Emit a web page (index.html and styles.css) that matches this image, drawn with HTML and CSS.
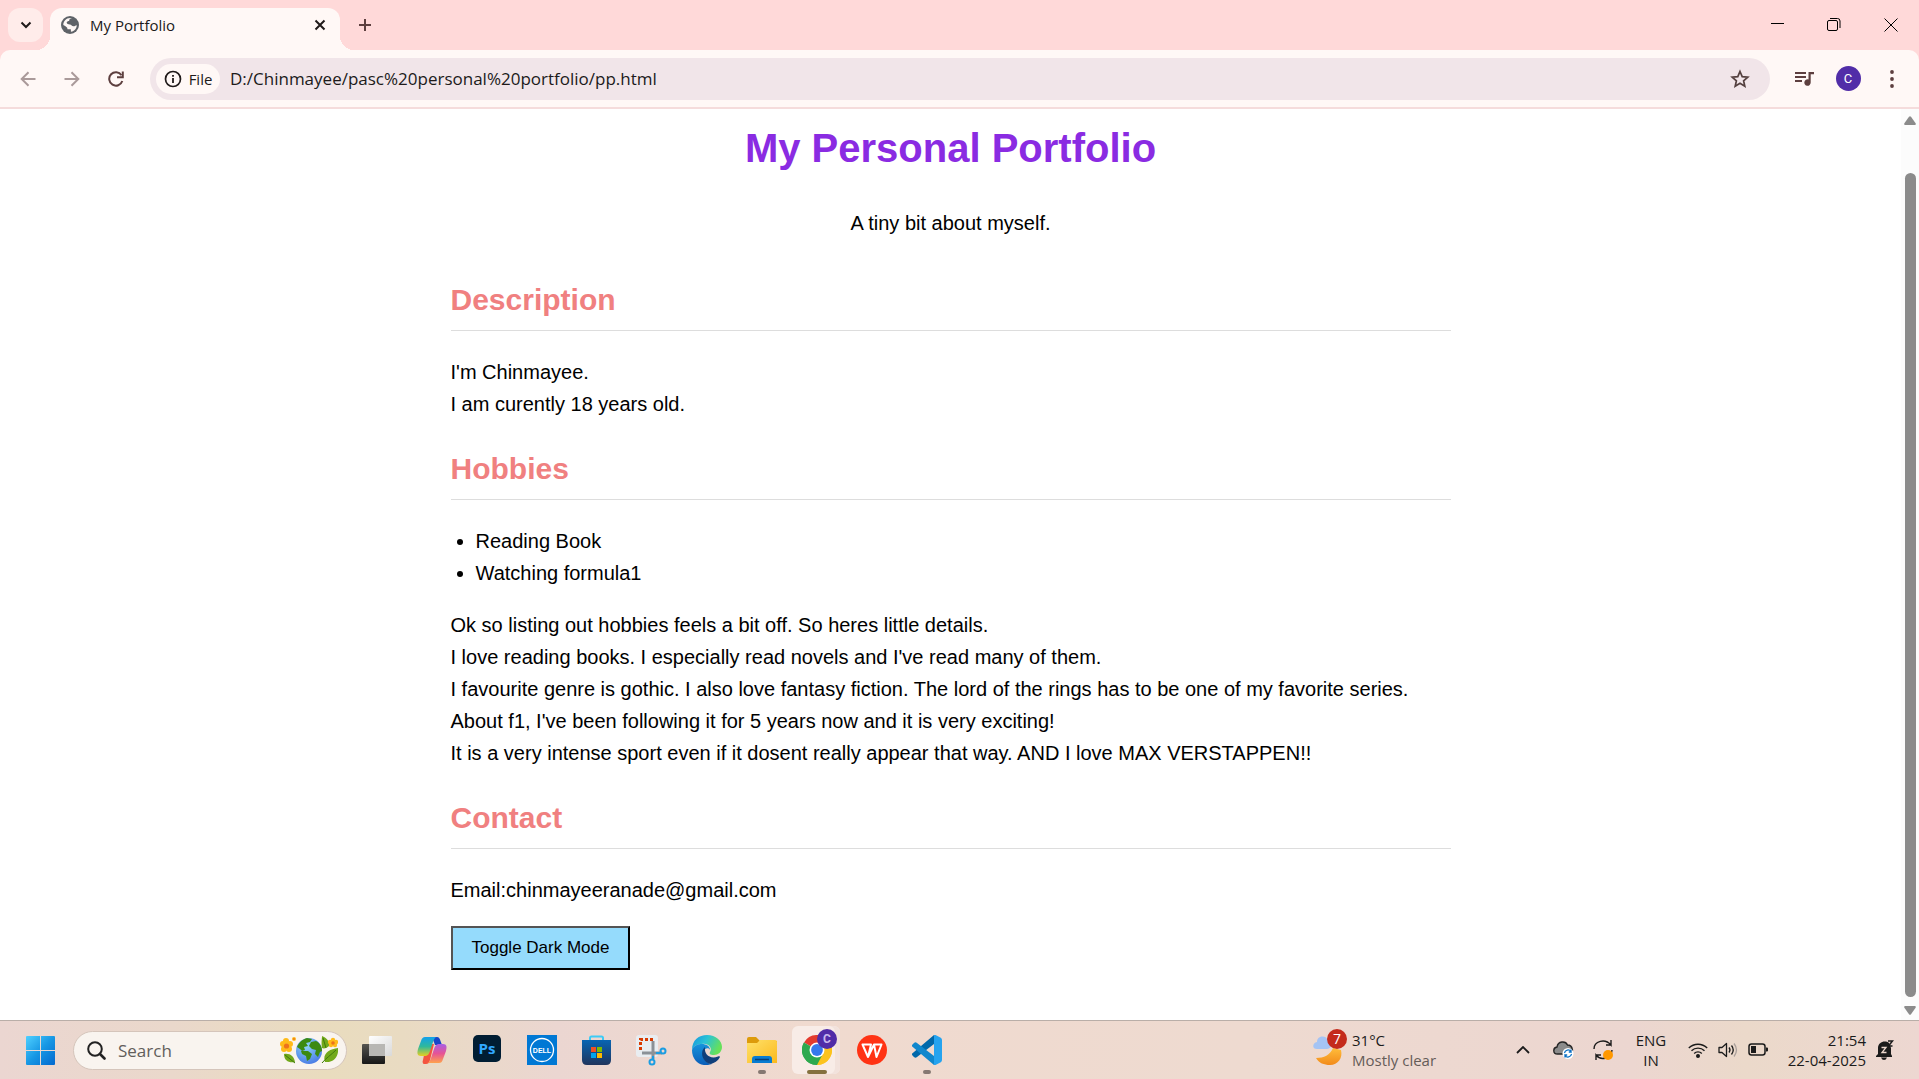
FILE: index.html
```html
<!DOCTYPE html>
<html lang="en">
<head>
<meta charset="utf-8">
<title>My Portfolio</title>
<link rel="stylesheet" href="styles.css">
</head>
<body>
<header class="browser">
  <div class="tabstrip">
    <button class="tab-search" aria-label="Search tabs"><svg width="12" height="8" viewBox="0 0 12 8"><path d="M1.500 1.500 6 6l4.500-4.500" fill="none" stroke="#201a1a" stroke-width="2"/></svg></button>
    <div class="tab">
      <svg width="18" height="18" viewBox="0 0 18 18"><circle cx="9" cy="9" r="9" fill="#5f6368"/><path d="M11 2.200C9.500 2 8.300 3 8.300 4.200c0 1.300-2.600.6-2.600 2.400 0 1.400 1.500 1.800 3 1.800 2 0 2 1.900 3.800 1.900 1.500 0 2-1.100 3.300-1.100-.1 3-2.300 6-5.800 6.500-.4-.9.300-1.700-.3-2.500H6.500c0-2.200-1.500-2.500-4.200-4.200C2.200 5 6 1 11 2.200z" fill="#fff8f6"/></svg>
      <span class="tab-title">My Portfolio</span>
      <button class="icon-button" aria-label="Close tab"><svg width="12" height="12" viewBox="0 0 12 12"><path d="m1.500 1.500 9 9m0-9-9 9" fill="none" stroke="#201a1a" stroke-width="2"/></svg></button>
    </div>
    <button class="new-tab" aria-label="New tab"><svg width="14" height="14" viewBox="0 0 14 14"><path d="M7 1v12M1 7h12" fill="none" stroke="#5d3f3f" stroke-width="2"/></svg></button>
    <div class="window-controls">
      <button aria-label="Minimize"><svg width="14" height="14" viewBox="0 0 14 14"><path d="M1 5.500h13" stroke="#000"/></svg></button>
      <button aria-label="Restore"><svg width="14" height="14" viewBox="0 0 14 14" fill="none" stroke="#000"><rect x=".5" y="2.500" width="10" height="10" rx="1.500"/><path d="M3 .5h7.500a2.500 2.500 0 0 1 2.500 2.500V10"/></svg></button>
      <button aria-label="Close"><svg width="14" height="14" viewBox="0 0 14 14"><path d="m.5.5 13 13m0-13-13 13" stroke="#000"/></svg></button>
    </div>
  </div>
  <div class="toolbar">
    <button class="tool" aria-label="Back"><svg width="16" height="16" viewBox="0 0 16 16" fill="none" stroke="#aa9a9a" stroke-width="2"><path d="M15.500 8H2M8.500 1.200 1.700 8l6.800 6.800"/></svg></button>
    <button class="tool" aria-label="Forward"><svg width="16" height="16" viewBox="0 0 16 16" fill="none" stroke="#aa9a9a" stroke-width="2"><path d="M.5 8H14M7.500 1.200 14.300 8l-6.800 6.800"/></svg></button>
    <button class="tool" aria-label="Reload"><svg width="16" height="16" viewBox="0 0 16 16" fill="none" stroke="#5d3f3f" stroke-width="2"><path d="M14.300 10A6.700 6.700 0 1 1 13.500 4.200"/><path d="M14.800.5v5.700H9"/></svg></button>
    <div class="omnibox">
      <button class="chip"><svg width="18" height="18" viewBox="0 0 18 18"><circle cx="9" cy="9" r="7.500" fill="none" stroke="#201a1a" stroke-width="1.700"/><path d="M9 8v5M9 5v1.800" stroke="#201a1a" stroke-width="1.800"/></svg>File</button>
      <input class="url" aria-label="Address" value="D:/Chinmayee/pasc%20personal%20portfolio/pp.html">
      <button class="icon-button" aria-label="Bookmark this page"><svg width="20" height="20" viewBox="0 0 20 20"><path d="m10 2.500 2.200 5.100 5.600.5-4.200 3.700 1.200 5.400L10 14.300l-4.800 2.900 1.200-5.400-4.200-3.700 5.600-.5z" fill="none" stroke="#54403f" stroke-width="1.700"/></svg></button>
    </div>
    <button class="tool" aria-label="Media controls"><svg width="20" height="16" viewBox="0 0 20 16"><path d="M1 2h11M1 6h11M1 10h7" stroke="#5d3f3f" stroke-width="2"/><path d="M14.500 1H20v2.200h-3.300v8.300a3.200 3.200 0 1 1-2.200-3z" fill="#5d3f3f"/></svg></button>
    <button class="tool" aria-label="Profile"><span class="avatar">C</span></button>
    <button class="tool" aria-label="Menu"><svg width="4" height="18" viewBox="0 0 4 18" fill="#5d3f3f"><circle cx="2" cy="2" r="1.900"/><circle cx="2" cy="9" r="1.900"/><circle cx="2" cy="16" r="1.900"/></svg></button>
  </div>
</header>

<div class="viewport">
  <main class="page">
    <div class="intro">
      <h1>My Personal Portfolio</h1>
      <p>A tiny bit about myself.</p>
    </div>
    <section>
      <h2>Description</h2>
      <p>I'm Chinmayee.<br>I am curently 18 years old.</p>
    </section>
    <section>
      <h2>Hobbies</h2>
      <ul>
        <li>Reading Book</li>
        <li>Watching formula1</li>
      </ul>
      <p>Ok so listing out hobbies feels a bit off. So heres little details.<br>
      I love reading books. I especially read novels and I've read many of them.<br>
      I favourite genre is gothic. I also love fantasy fiction. The lord of the rings has to be one of my favorite series.<br>
      About f1, I've been following it for 5 years now and it is very exciting!<br>
      It is a very intense sport even if it dosent really appear that way. AND I love MAX VERSTAPPEN!!</p>
    </section>
    <section>
      <h2>Contact</h2>
      <p>Email:chinmayeeranade@gmail.com</p>
      <button class="toggle">Toggle Dark Mode</button>
    </section>
  </main>
  <div class="scrollbar" aria-hidden="true">
    <svg width="12" height="9" viewBox="0 0 12 9"><path d="M5 .8a1.300 1.300 0 0 1 2 0l4.600 6.400c.5.900 0 1.800-.9 1.800H1.300C.4 9-.1 8.100.4 7.200z" fill="#8b8b8b"/></svg>
    <div class="thumb"></div>
    <svg width="12" height="9" viewBox="0 0 12 9"><path d="M5 8.200a1.300 1.300 0 0 0 2 0l4.600-6.400c.5-.9 0-1.800-.9-1.800H1.300C.4 0-.1.900.4 1.800z" fill="#8b8b8b"/></svg>
  </div>
</div>

<footer class="taskbar">
  <button class="start" aria-label="Start"><svg width="29" height="29" viewBox="0 0 29 29"><defs><linearGradient id="win" x1="0" y1="0" x2="1" y2="1" gradientUnits="objectBoundingBox"><stop offset="0" stop-color="#4fd0ff"/><stop offset=".5" stop-color="#1797e4"/><stop offset="1" stop-color="#0268cf"/></linearGradient></defs><path d="M1 0h13v14H0V1a1 1 0 0 1 1-1zm14 0h13a1 1 0 0 1 1 1v13H15zM0 15h14v14H1a1 1 0 0 1-1-1zm15 0h14v13a1 1 0 0 1-1 1H15z" fill="url(#win)"/></svg></button>
  <label class="search">
    <svg width="19" height="19" viewBox="0 0 19 19"><circle cx="8" cy="8" r="6.800" fill="none" stroke="#222" stroke-width="2"/><path d="m13 13 4.500 4.500" stroke="#222" stroke-width="2.600" stroke-linecap="round"/></svg>
    <input type="text" placeholder="Search" aria-label="Search">
    <svg width="58" height="30" viewBox="0 0 58 30"><defs><radialGradient id="sea" cx=".4" cy=".3" r=".8"><stop offset="0" stop-color="#8fd5fb"/><stop offset="1" stop-color="#4272e3"/></radialGradient></defs>
      <circle cx="29" cy="16" r="13" fill="url(#sea)"/><path d="M17 12c2-5 6-8 10-9l5 1-2 3-4 1 2 3-4 1 1 3-3 1-2-2zM31 7l5-1c4 2 6 6 6 10l-2 1-2 5-3-3 1-4-4-1-3-3zM21 16l7 0 4 3-2 5-3 2-1-5-4-2z" fill="#3c8a12"/>
      <path d="M42 13c-1-5 0-9 0-12 5 2 8 6 7 10-2 2-5 3-7 2zM45 27c-3-8 4-13 13-14 1 8-4 15-13 14zM4 19c6-1 10 2 11 8-6 1-11-1-11-8z" fill="#72a91b"/><path d="m43 3 3 10M42 28c4-5 9-8 14-13M5 20l10 8" stroke="#3e790c" fill="none"/>
      <g fill="#ffbb19"><circle cx="3" cy="9" r="3"/><circle cx="10" cy="9" r="3"/><circle cx="6" cy="6" r="3"/><circle cx="4" cy="14" r="3"/><circle cx="9" cy="14" r="3"/><circle cx="14" cy="4" r="2"/><circle cx="50" cy="7" r="2.200"/><circle cx="56" cy="7" r="2.200"/><circle cx="53" cy="5" r="2.200"/><circle cx="51" cy="10" r="2.200"/><circle cx="55" cy="10" r="2.200"/></g><g fill="#ed731b"><circle cx="6.500" cy="11" r="2.600"/><circle cx="53" cy="8" r="1.800"/><circle cx="14" cy="4" r=".9"/></g></svg>
  </label>
  <nav class="apps" aria-label="Pinned apps">
    <button aria-label="Task view"><svg width="30" height="30" viewBox="0 0 30 30"><defs><linearGradient id="tv" x2="0" y2="1"><stop stop-color="#555450"/><stop offset="1" stop-color="#171717"/></linearGradient><linearGradient id="tw" x2="1" y2="1"><stop stop-color="#fff"/><stop offset="1" stop-color="#d9d9d9"/></linearGradient></defs><rect y="9" width="23" height="20" rx="1" fill="url(#tv)"/><rect x="7" y="1" width="23" height="20" rx="1" fill="url(#tw)"/><path d="M7 9h16v12H8a1 1 0 0 1-1-1z" fill="#b8b7b4"/></svg></button>
    <button aria-label="Copilot"><svg width="30" height="28" viewBox="0 0 30 28"><defs><linearGradient id="ca" x2="0" y2="1"><stop stop-color="#12a0ec"/><stop offset=".5" stop-color="#2fb99b"/><stop offset="1" stop-color="#e8cf20"/></linearGradient><linearGradient id="cb" x2="0" y2="1"><stop stop-color="#a760e6"/><stop offset=".5" stop-color="#e65395"/><stop offset="1" stop-color="#ffa24c"/></linearGradient></defs>
      <path d="M15 1h5c2 0 3 2 3.500 4L25 9h-7z" fill="#1746c8"/><path d="M7 19 13 8h4l-4 16c-1 3-2 4-4 4H7c-1 0-2-2-1-4z" fill="#f4543f"/><path d="M8 1h12c-2 0-3 2-4 5l-3 9c-1 3-2 5-6 5H4c-4 0-4-3-3-7L4 5c1-3 2-4 4-4z" fill="url(#ca)"/><path d="M22 27H10c2 0 3-2 4-5l3-9c1-3 2-5 6-5h3c4 0 4 3 3 7l-3 8c-1 3-2 4-4 4z" fill="url(#cb)"/></svg></button>
    <button aria-label="Photoshop"><svg width="28" height="32" viewBox="0 0 28 32"><rect y="1" width="28" height="27" rx="5" fill="#001d33"/><text x="14" y="20" text-anchor="middle" class="logo-ps">Ps</text></svg></button>
    <button aria-label="Dell"><svg width="30" height="30" viewBox="0 0 30 30"><path d="M0 0h30v30H0z" fill="#0078d4"/><circle cx="15" cy="15" r="11.500" fill="none" stroke="#fff" stroke-width="1.300"/><text x="15" y="18" text-anchor="middle" class="logo-dell">DELL</text></svg></button>
    <button aria-label="Microsoft Store"><svg width="29" height="30" viewBox="0 0 29 30"><defs><linearGradient id="st" x2="0" y2="1"><stop stop-color="#0865b3"/><stop offset="1" stop-color="#20355d"/></linearGradient></defs><path d="M8 6V3q0-1.500 1.500-1.500h10Q21 1.500 21 3v3" fill="none" stroke="#3dcbf6" stroke-width="2"/><path d="M0 5h29v20q0 5-5 5H5q-5 0-5-5z" fill="url(#st)"/><path d="M9 12h5v5H9z" fill="#f25022"/><path d="M15 12h5v5h-5z" fill="#7fba00"/><path d="M9 18h5v5H9z" fill="#00a4ef"/><path d="M15 18h5v5h-5z" fill="#ffb900"/></svg></button>
    <button aria-label="Snipping Tool"><svg width="31" height="32" viewBox="0 0 31 32"><rect y="1" width="22" height="22" rx="3" fill="#e9edf1"/><path d="M4.500 16V5.500H17" fill="none" stroke="#d83b01" stroke-width="3" stroke-dasharray="3 2"/><path d="M17 7v18M6 19h20" stroke="#8b9197" stroke-width="3"/><g fill="none" stroke="#1b9de2" stroke-width="2"><circle cx="16" cy="28" r="2.500"/><circle cx="27" cy="17" r="2.500"/><path d="M17 25v-3M20 19h4"/></g></svg></button>
    <button aria-label="Edge"><svg width="30" height="30" viewBox="0 0 30 30"><defs><linearGradient id="ed" x2="1" y2=".4"><stop stop-color="#1593e0"/><stop offset=".5" stop-color="#2bc3d5"/><stop offset="1" stop-color="#66e05a"/></linearGradient><linearGradient id="ee" x2="0" y2="1"><stop stop-color="#1793dc"/><stop offset="1" stop-color="#0a5db8"/></linearGradient></defs><path d="M0 15C0 5 7 0 15 0c9 0 15 6 15 12 0 5-4 8-8 8-4 0-5-1-4-3 3-4-2-9-8-8-5 0-8 2-10 6z" fill="url(#ed)"/><path d="M0 15c2-5 6-6 10-6 4 0 8 2 8 6-1-3-6-2-7 2-1 6 3 12 9 12C9 33 0 26 0 15z" fill="url(#ee)"/><path d="M13 12c-6 5-2 16 6 17 3-1 7-3 9-7 0-1-1-1-2-.5-8 3-14-2-13-9.500z" fill="#103f7b"/></svg></button>
    <button aria-label="File Explorer" class="running"><svg width="30" height="27" viewBox="0 0 30 27"><defs><linearGradient id="fo" x2="1" y2="1"><stop stop-color="#ffe16a"/><stop offset="1" stop-color="#fbb91c"/></linearGradient></defs><path d="M0 2q0-2 2-2h7l4 4h17v4H0z" fill="#dd9b0b"/><path d="M0 6h10l3-3h15q2 0 2 2v21H0z" fill="url(#fo)"/><path d="M5 26v-4q0-3 3-3h14q3 0 3 3v4z" fill="#087cd1"/><path d="M8 22.500h14" stroke="#063f77" stroke-width="1.500"/></svg></button>
    <button aria-label="Chrome" class="active"><svg width="30" height="30" viewBox="0 0 30 30"><path d="M15 15 2 7.500A15 15 0 0 1 28 7.500z" fill="#e33b2e"/><path d="M15 15 28 7.500A15 15 0 0 1 15 30z" fill="#fcc31e"/><path d="M15 15v15A15 15 0 0 1 2 7.500z" fill="#2da94f"/><path d="M15 8h13.300A15 15 0 0 1 15 30l6-11.500z" fill="#fcc31e"/><path d="M9 18.500 2 7.500A15 15 0 0 0 15 30l6-11.500z" fill="#2da94f"/><circle cx="15" cy="15" r="7.500" fill="#fff"/><circle cx="15" cy="15" r="5.900" fill="#3579ed"/></svg><span class="badge">C</span></button>
    <button aria-label="WPS Office"><svg width="30" height="30" viewBox="0 0 30 30"><circle cx="15" cy="15" r="15" fill="#ff3314"/><path d="M5.500 9.500H14l-3 12.500zM11 22l6-12.500 2.500 12.500 5-12.500H17" fill="none" stroke="#fff" stroke-width="2" stroke-linejoin="round"/></svg></button>
    <button aria-label="Visual Studio Code" class="running"><svg width="30" height="30" viewBox="0 0 30 30"><path d="M22 0v9L5 22c-1 1-2 1-3 0l-1.500-1.500c-.8-.8-.8-1.600 0-2.300z" fill="#0068aa"/><path d="M22 30v-9L5 8C4 7 3 7 2 8L.5 9.500c-.8.8-.8 1.600 0 2.300z" fill="#1087cd"/><path d="M22 0q.7-.3 1.500 0L28.800 2.800Q30 3.500 30 5v20q0 1.500-1.200 2.200L23.500 30q-.8.300-1.500 0z" fill="#25a3ef"/></svg></button>
  </nav>
  <button class="weather">
    <span class="weather-icon"><svg width="34" height="34" viewBox="0 0 34 34"><defs><linearGradient id="mo" x2="0" y2="1"><stop stop-color="#ffbd3b"/><stop offset="1" stop-color="#f28a1a"/></linearGradient></defs><path d="M3 25c8 0 14-3 17-10l8 2c2 8-3 15-11 15-6 0-11-2-14-7z" fill="url(#mo)"/><path d="M4 16c-5 0-5-6 0-7 0-6 8-7 10-3 5 0 6 10 0 10z" fill="#a5c4f4"/></svg><span class="count">7</span></span>
    <span class="weather-text"><span>31°C</span><span class="dim">Mostly clear</span></span>
  </button>
  <div class="tray">
    <button aria-label="Show hidden icons"><svg width="14" height="8" viewBox="0 0 14 8"><path d="m1 7 6-6 6 6" fill="none" stroke="#1b1b1b" stroke-width="1.800"/></svg></button>
    <button aria-label="OneDrive"><svg width="21" height="18" viewBox="0 0 21 18"><path d="M4.500 13C-.5 13-.2 6.500 4 6 5 0 12.500-.5 14.500 4c5.500 0 7 9 1.500 9z" fill="#8b8b8b" stroke="#252525" stroke-width="1.400"/><circle cx="15" cy="12.500" r="5.500" fill="#fff"/><path d="M11.500 12a3.600 3.600 0 0 1 6.500-1.500V8.500m0 2.500h-2.200M18.500 13a3.600 3.600 0 0 1-6.500 1.500v2m0-2.500h2.200" fill="none" stroke="#0a6fc4" stroke-width="1.300"/></svg></button>
    <button aria-label="Updates available"><svg width="22" height="22" viewBox="0 0 22 22"><path d="M2 10C2 2 13-1 19 6V1m0 5h-5M20 11a9 9 0 0 1-16 5v5m0-5h5" fill="none" stroke="#1b1b1b" stroke-width="1.400"/><circle cx="16" cy="16" r="5" fill="#ff9800"/></svg></button>
    <button class="language"><span>ENG</span><span>IN</span></button>
    <button class="status" aria-label="Network, volume and battery">
      <svg width="20" height="16" viewBox="0 0 20 16" fill="none" stroke="#1b1b1b" stroke-width="1.400"><path d="M.8 6a13 13 0 0 1 18.400 0M3.500 8.800a9.200 9.200 0 0 1 13 0M6.200 11.500a5.300 5.300 0 0 1 7.600 0"/><circle cx="10" cy="14" r="1.300" fill="#1b1b1b"/></svg>
      <svg width="20" height="16" viewBox="0 0 20 16" fill="none" stroke="#1b1b1b" stroke-width="1.300"><path d="M1 5.500h3L8.500 1.500v13L4 10.500H1z" stroke-linejoin="round"/><path d="M11 5.500q2 2.500 0 5M13.500 3.500q3.500 4.500 0 9"/><path d="M16 1.500q5 6.500 0 13" stroke="#aaa09b"/></svg>
      <svg width="20" height="16" viewBox="0 0 20 16"><rect x="1" y="2" width="16" height="11" rx="2.500" fill="none" stroke="#1b1b1b" stroke-width="1.500"/><path d="M3 4h5v7H3zM18 5.500h1q1 0 1 1v2q0 1-1 1h-1z" fill="#1b1b1b"/></svg>
    </button>
    <button class="clock"><span>21:54</span><span>22-04-2025</span></button>
    <button class="bell" aria-label="Notifications"><svg width="18" height="20" viewBox="0 0 18 20"><path d="M2 8C2 2 9 0 13 3l2 5v6l1 2v1H0v-1l2-2zM5 17.500h6q-1 2.500-3 2.500t-3-2.500z" fill="#1b1b1b"/><path d="M12 1h4.500l-4 5h4" fill="none" stroke="#1b1b1b" stroke-width="1.500"/><path d="M5.500 7.500H10l-4 5h4.500" fill="none" stroke="#ecd8cd" stroke-width="1.300"/></svg></button>
  </div>
</footer>
</body>
</html>
```
FILE: styles.css
```css
* { box-sizing: border-box; }

body {
  margin: 0;
  min-height: 100vh;
  display: flex;
  flex-direction: column;
  background: #fff;
  font-family: "Open Sans", "Noto Sans", sans-serif;
  font-size: 16px;
  color: #201a1a;
}

button {
  font: inherit;
  color: inherit;
  background: none;
  border: 0;
  padding: 0;
  display: flex;
  align-items: center;
  justify-content: center;
}

input {
  font: inherit;
  color: inherit;
  background: none;
  border: 0;
  padding: 0;
  min-width: 0;
  outline: 0;
}

svg { display: block; flex: none; }

/* Browser window */
.browser { background: #ffd9d9; }

.tabstrip {
  display: flex;
  height: 50px;
  padding: 8px 0 0 8px;
}

.tab-search {
  width: 35px;
  height: 34px;
  margin-right: 7px;
  border-radius: 12px;
  background: #ffecea;
}

.tab {
  position: relative;
  display: flex;
  align-items: center;
  gap: 11px;
  width: 290px;
  padding: 0 4px 8px 11px;
  border-radius: 12px 12px 0 0;
  background: #fff8f6;
  font-size: 15px;
}

.tab::before,
.tab::after {
  content: "";
  position: absolute;
  bottom: 0;
  width: 14px;
  height: 14px;
}

.tab::before {
  right: 100%;
  background: radial-gradient(circle at 0 0, transparent 14px, #fff8f6 14px);
}

.tab::after {
  left: 100%;
  background: radial-gradient(circle at 100% 0, transparent 14px, #fff8f6 14px);
}

.tab-title { flex: 1; }

.icon-button { width: 32px; height: 32px; }

.new-tab { width: 50px; height: 34px; }

.window-controls {
  display: flex;
  margin-left: auto;
}

.window-controls button { width: 57px; height: 34px; }

.toolbar {
  display: flex;
  align-items: center;
  height: 59px;
  padding: 0 5px 0 6px;
  border-bottom: 2px solid #f5dcdc;
  border-radius: 10px 10px 0 0;
  background: #fff8f6;
}

.tool { width: 44px; height: 42px; }

.omnibox {
  flex: 1;
  display: flex;
  align-items: center;
  gap: 10px;
  height: 42px;
  margin: 0 12px;
  padding: 0 14px 0 6px;
  border-radius: 21px;
  background: #f1e5e9;
}

.chip {
  gap: 7px;
  width: 64px;
  height: 30px;
  border-radius: 15px;
  background: #fff8f6;
  font-size: 15px;
}

.url { flex: 1; font-size: 17px; }

.avatar {
  width: 25px;
  height: 25px;
  border-radius: 50%;
  background: #512da8;
  color: #fff;
  font: 13px/25px Roboto, sans-serif;
  text-align: center;
}

/* Web page */
.viewport {
  flex: 1;
  display: flex;
}

.page {
  width: 1000px;
  margin: 0 auto;
  padding: 7px 0 49px;
  font: 20px/32px "Liberation Sans", Arial, sans-serif;
  color: #000;
}

.page p { margin: 0 0 20px; }

.page .intro { text-align: center; }

.page .intro p { margin-bottom: 37px; }

.page h1 {
  margin: 0 0 27px;
  font-size: 40px;
  line-height: 64px;
  color: #8a2be2;
}

.page h2 {
  margin: 0 0 25px;
  padding-bottom: 6px;
  border-bottom: 1px solid #ddd;
  font-size: 30px;
  line-height: 48px;
  color: #f08080;
}

.page section + section { margin-top: 25px; }

.page section > p:last-child { margin-bottom: 0; }

.page ul { margin: 0 0 20px; padding-left: 25px; }

.toggle {
  height: 44px;
  padding: 0 19px;
  border: 2px outset #000;
  background: #95dbfc;
  font-size: 17px;
}

.scrollbar {
  display: flex;
  flex-direction: column;
  align-items: center;
  width: 18px;
  padding: 7px 0 5px;
  background: #fcfcfc;
}

.thumb {
  flex: 1;
  width: 11px;
  margin: 48px 0 9px;
  border-radius: 6px;
  background: #8b8b8b;
}

/* Taskbar */
.taskbar {
  display: flex;
  align-items: center;
  height: 59px;
  border-top: 1px solid #b9aea8;
  background: linear-gradient(90deg, #ebd6d1 0%, #ead8cb 9%, #e9dcbe 17%, #e9dbc2 21%, #ebd6d1 29%, #f0dacf 42%, #eedad0 65%, #ecd6d0 85%, #ebd9ca 91%, #edd7d1 100%);
  color: #1b1b1b;
}

.start { width: 55px; height: 48px; margin: 0 5px 0 13px; }

.search {
  display: flex;
  align-items: center;
  width: 274px;
  height: 39px;
  margin-right: 2px;
  padding: 0 8px 0 13px;
  border: 1px solid #d5c5bb;
  border-radius: 20px;
  background: #f9f4ef;
}

.search input { flex: 1; margin-left: 12px; font-size: 17px; }

.search input::placeholder { color: #625e5b; opacity: 1; }

.apps { display: flex; }

.apps button { position: relative; width: 55px; height: 48px; }

.apps .running::after,
.apps .active::after {
  content: "";
  position: absolute;
  bottom: 0;
  width: 8px;
  height: 4px;
  border-radius: 2px;
  background: #857872;
}

.apps .active::after { width: 20px; background: #84713e; }

.apps .active::before {
  content: "";
  position: absolute;
  inset: 0 4px 0 3px;
  border-radius: 6px;
  background: #f8ece7;
  box-shadow: inset -5px 0 #f2e2dc;
}

.active svg { position: relative; }

.badge {
  position: absolute;
  top: 3px;
  right: 7px;
  width: 20px;
  height: 20px;
  border-radius: 50%;
  background: #512da8;
  color: #c8b8ee;
  font: bold 12px/20px Roboto, sans-serif;
}

.logo-ps { font: bold 15px "Open Sans", sans-serif; fill: #31a8ff; }

.logo-dell { font: bold 7px "Liberation Sans", sans-serif; fill: #fff; }

.weather {
  gap: 5px;
  width: 190px;
  margin-left: auto;
  justify-content: flex-start;
}

.weather-icon { position: relative; }

.count {
  position: absolute;
  top: -4px;
  left: 14px;
  width: 20px;
  height: 20px;
  border-radius: 50%;
  background: #c42b1c;
  color: #fff;
  font-size: 14px;
  line-height: 20px;
}

.weather-text,
.language,
.clock {
  display: flex;
  flex-direction: column;
  font-size: 15px;
  line-height: 20px;
}

.weather-text { align-items: flex-start; }

.dim { color: #655c58; }

.tray { display: flex; padding-right: 15px; }

.tray button { width: 40px; height: 48px; }

.tray .language { width: 56px; }

.tray .status { gap: 10px; width: 98px; }

.tray .clock { width: 89px; align-items: flex-end; }

.tray .bell { width: 38px; }
```
